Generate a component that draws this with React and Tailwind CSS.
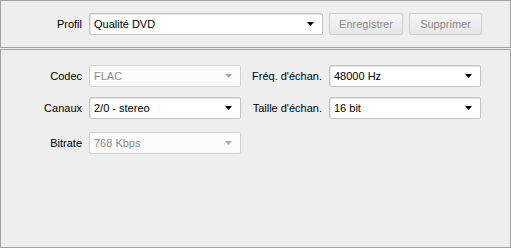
import React from 'react';

function Arrow({ disabled }) {
  return (
    <svg width="7" height="4" viewBox="0 0 7 4" className="shrink-0">
      <path d="M0 0H7L3.5 4Z" fill={disabled ? '#a8a8a8' : '#000'} />
    </svg>
  );
}

function Select({ value, disabled, width = 'w-[152px]' }) {
  return (
    <div
      className={`${width} h-[22px] flex items-center pl-[4px] pr-[8px] border rounded-[2px] ${
        disabled
          ? 'border-[#d4d4d4] bg-[#fbfbfb] text-[#8c8c8c]'
          : 'border-[#c4c4c4] bg-white text-black shadow-[inset_1px_1px_0_#e4e4e4]'
      }`}
    >
      <span className="flex-1 truncate">{value}</span>
      <Arrow disabled={disabled} />
    </div>
  );
}

function Button({ children, width }) {
  return (
    <div
      className={`${width} h-[22px] flex items-center justify-center rounded-[2px] border border-[#cfcfcf] bg-gradient-to-b from-[#f6f6f6] to-[#e6e6e6] text-[#8a8a8a]`}
    >
      {children}
    </div>
  );
}

function Row({ label, children, labelW = 'w-[88px]' }) {
  return (
    <div className="flex items-center">
      <span className={`${labelW} text-right pr-[7px] shrink-0`}>{label}</span>
      {children}
    </div>
  );
}

export default function App() {
  return (
    <div
      className="w-[511px] h-[248px] bg-[#eeeeee] text-black text-[11px] flex flex-col gap-[1px]"
      style={{ fontFamily: '"Liberation Sans", Arial, sans-serif' }}
    >
      {/* Profile bar */}
      <div className="h-[48px] shrink-0 border border-[#a3a3a3] pt-[12px] flex items-start">
        <Row label="Profil">
          <Select value="Qualité DVD" width="w-[234px]" />
        </Row>
        <div className="ml-[6px] flex gap-[6px]">
          <Button width="w-[74px]">Enregistrer</Button>
          <Button width="w-[73px]">Supprimer</Button>
        </div>
      </div>

      {/* Settings */}
      <div className="flex-1 border border-[#a3a3a3] pt-[15px] flex flex-col gap-[10px]">
        <div className="flex">
          <Row label="Codec">
            <Select value="FLAC" disabled />
          </Row>
          <Row label="Fréq. d'échan.">
            <Select value="48000 Hz" />
          </Row>
        </div>
        <div className="flex">
          <Row label="Canaux">
            <Select value="2/0 - stereo" />
          </Row>
          <Row label="Taille d'échan.">
            <Select value="16 bit" />
          </Row>
        </div>
        <div className="flex mt-[3px]">
          <Row label="Bitrate">
            <Select value="768 Kbps" disabled />
          </Row>
        </div>
      </div>
    </div>
  );
}
